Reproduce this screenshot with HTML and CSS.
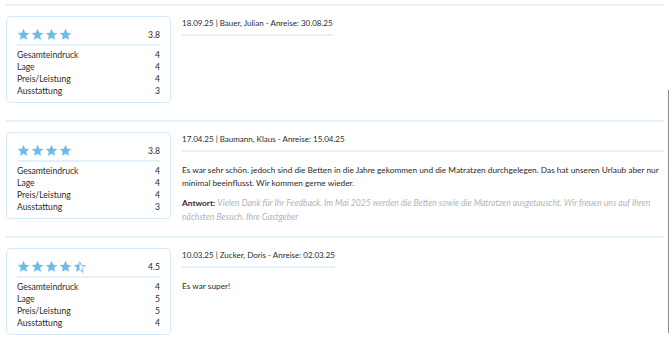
FILE: index.html
```html
<!DOCTYPE html>
<html lang="de">
<head>
    <meta charset="UTF-8">
    <meta name="viewport" content="width=device-width, initial-scale=1.0">
    <title>Bewertungen</title>
    <link rel="stylesheet" href="styles.css">
</head>
<body>
    <div class="reviews">
        <div class="review">
            <div class="score-card">
                <div class="score-head">
                    <div class="stars">
                        <svg class="star" viewBox="0 0 24 24"><path d="M12 1.5l3.1 7.1 7.6.7-5.8 5.1 1.7 7.5L12 18l-6.6 3.9 1.7-7.5L1.3 9.3l7.6-.7z"/></svg>
                        <svg class="star" viewBox="0 0 24 24"><path d="M12 1.5l3.1 7.1 7.6.7-5.8 5.1 1.7 7.5L12 18l-6.6 3.9 1.7-7.5L1.3 9.3l7.6-.7z"/></svg>
                        <svg class="star" viewBox="0 0 24 24"><path d="M12 1.5l3.1 7.1 7.6.7-5.8 5.1 1.7 7.5L12 18l-6.6 3.9 1.7-7.5L1.3 9.3l7.6-.7z"/></svg>
                        <svg class="star" viewBox="0 0 24 24"><path d="M12 1.5l3.1 7.1 7.6.7-5.8 5.1 1.7 7.5L12 18l-6.6 3.9 1.7-7.5L1.3 9.3l7.6-.7z"/></svg>
                    </div>
                    <span class="score">3.8</span>
                </div>
                <div class="score-row"><span>Gesamteindruck</span><span>4</span></div>
                <div class="score-row"><span>Lage</span><span>4</span></div>
                <div class="score-row"><span>Preis/Leistung</span><span>4</span></div>
                <div class="score-row"><span>Ausstattung</span><span>3</span></div>
            </div>
            <div class="review-body">
                <div class="review-meta">18.09.25 | Bauer, Julian - Anreise: 30.08.25</div>
            </div>
        </div>

        <div class="review">
            <div class="score-card">
                <div class="score-head">
                    <div class="stars">
                        <svg class="star" viewBox="0 0 24 24"><path d="M12 1.5l3.1 7.1 7.6.7-5.8 5.1 1.7 7.5L12 18l-6.6 3.9 1.7-7.5L1.3 9.3l7.6-.7z"/></svg>
                        <svg class="star" viewBox="0 0 24 24"><path d="M12 1.5l3.1 7.1 7.6.7-5.8 5.1 1.7 7.5L12 18l-6.6 3.9 1.7-7.5L1.3 9.3l7.6-.7z"/></svg>
                        <svg class="star" viewBox="0 0 24 24"><path d="M12 1.5l3.1 7.1 7.6.7-5.8 5.1 1.7 7.5L12 18l-6.6 3.9 1.7-7.5L1.3 9.3l7.6-.7z"/></svg>
                        <svg class="star" viewBox="0 0 24 24"><path d="M12 1.5l3.1 7.1 7.6.7-5.8 5.1 1.7 7.5L12 18l-6.6 3.9 1.7-7.5L1.3 9.3l7.6-.7z"/></svg>
                    </div>
                    <span class="score">3.8</span>
                </div>
                <div class="score-row"><span>Gesamteindruck</span><span>4</span></div>
                <div class="score-row"><span>Lage</span><span>4</span></div>
                <div class="score-row"><span>Preis/Leistung</span><span>4</span></div>
                <div class="score-row"><span>Ausstattung</span><span>3</span></div>
            </div>
            <div class="review-body">
                <div class="review-meta">17.04.25 | Baumann, Klaus - Anreise: 15.04.25</div>
                <p class="review-text">Es war sehr schön. jedoch sind die Betten in die Jahre gekommen und die Matratzen durchgelegen. Das hat unseren Urlaub aber nur minimal beeinflusst. Wir kommen gerne wieder.</p>
                <p class="review-answer"><strong>Antwort:</strong> <em>Vielen Dank für Ihr Feedback. Im Mai 2025 werden die Betten sowie die Matratzen ausgetauscht. Wir freuen uns auf Ihren nächsten Besuch. Ihre Gastgeber</em></p>
            </div>
        </div>

        <div class="review">
            <div class="score-card">
                <div class="score-head">
                    <div class="stars">
                        <svg class="star" viewBox="0 0 24 24"><path d="M12 1.5l3.1 7.1 7.6.7-5.8 5.1 1.7 7.5L12 18l-6.6 3.9 1.7-7.5L1.3 9.3l7.6-.7z"/></svg>
                        <svg class="star" viewBox="0 0 24 24"><path d="M12 1.5l3.1 7.1 7.6.7-5.8 5.1 1.7 7.5L12 18l-6.6 3.9 1.7-7.5L1.3 9.3l7.6-.7z"/></svg>
                        <svg class="star" viewBox="0 0 24 24"><path d="M12 1.5l3.1 7.1 7.6.7-5.8 5.1 1.7 7.5L12 18l-6.6 3.9 1.7-7.5L1.3 9.3l7.6-.7z"/></svg>
                        <svg class="star" viewBox="0 0 24 24"><path d="M12 1.5l3.1 7.1 7.6.7-5.8 5.1 1.7 7.5L12 18l-6.6 3.9 1.7-7.5L1.3 9.3l7.6-.7z"/></svg>
                        <svg class="star star-half" viewBox="0 0 24 24"><path d="M12 2.5v15.5l-6.6 3.9 1.7-7.5L1.3 9.3l7.6-.7z"/><path class="outline" d="M12 2.5l3.1 7.1 7.6.7-5.8 5.1 1.7 7.5L12 18"/></svg>
                    </div>
                    <span class="score">4.5</span>
                </div>
                <div class="score-row"><span>Gesamteindruck</span><span>4</span></div>
                <div class="score-row"><span>Lage</span><span>5</span></div>
                <div class="score-row"><span>Preis/Leistung</span><span>5</span></div>
                <div class="score-row"><span>Ausstattung</span><span>4</span></div>
            </div>
            <div class="review-body">
                <div class="review-meta">10.03.25 | Zucker, Doris - Anreise: 02.03.25</div>
                <p class="review-text">Es war super!</p>
            </div>
        </div>
    </div>
    <div class="scroll-thumb"></div>
</body>
</html>
```

FILE: styles.css
```css
* {
    margin: 0;
    padding: 0;
    box-sizing: border-box;
}

body {
    font-family: Lato, 'Open Sans', sans-serif;
    font-size: 8.3px;
    color: #2b2b2b;
    background: #fff;
}

.reviews {
    padding: 4px 6px 0;
    width: 670px;
}

.review {
    display: flex;
    align-items: flex-start;
    border-top: 2px solid #e4f1fa;
    padding: 10px 0 15px;
    height: 116px;
}

.score-card {
    flex: 0 0 165px;
    height: 87px;
    border: 1px solid #d2e8f6;
    border-radius: 5px;
    padding: 11px 10px 0;
}

.score-head {
    display: flex;
    justify-content: space-between;
    align-items: center;
    padding-bottom: 3px;
    border-bottom: 2px solid #e4f1fa;
    margin-bottom: 3px;
}

.stars {
    display: flex;
    gap: 1px;
}

.star {
    width: 13px;
    height: 13px;
    fill: #6cbbe8;
}

.star-half .outline {
    fill: none;
    stroke: #6cbbe8;
    stroke-width: 1.6;
    stroke-linejoin: round;
}

.score {
    font-size: 8.6px;
}

.score-row {
    display: flex;
    justify-content: space-between;
    line-height: 12px;
    font-size: 8.6px;
}

.review-body {
    flex: 0 1 auto;
    margin-left: 11px;
}

.review-meta {
    font-size: 8px;
    line-height: 13px;
    padding: 1px 0 4px;
    border-bottom: 2px solid #e4f1fa;
}

.review-text {
    line-height: 13px;
    margin-top: 12px;
}

.review-answer {
    font-size: 8.6px;
    line-height: 14px;
    margin-top: 6px;
}

.review-answer strong {
    font-size: 8.3px;
}

.review-answer em {
    color: #b4b4b4;
}

.scroll-thumb {
    position: fixed;
    right: 1px;
    top: 90px;
    width: 1px;
    height: 243px;
    background: #8a8a8a;
}
```
